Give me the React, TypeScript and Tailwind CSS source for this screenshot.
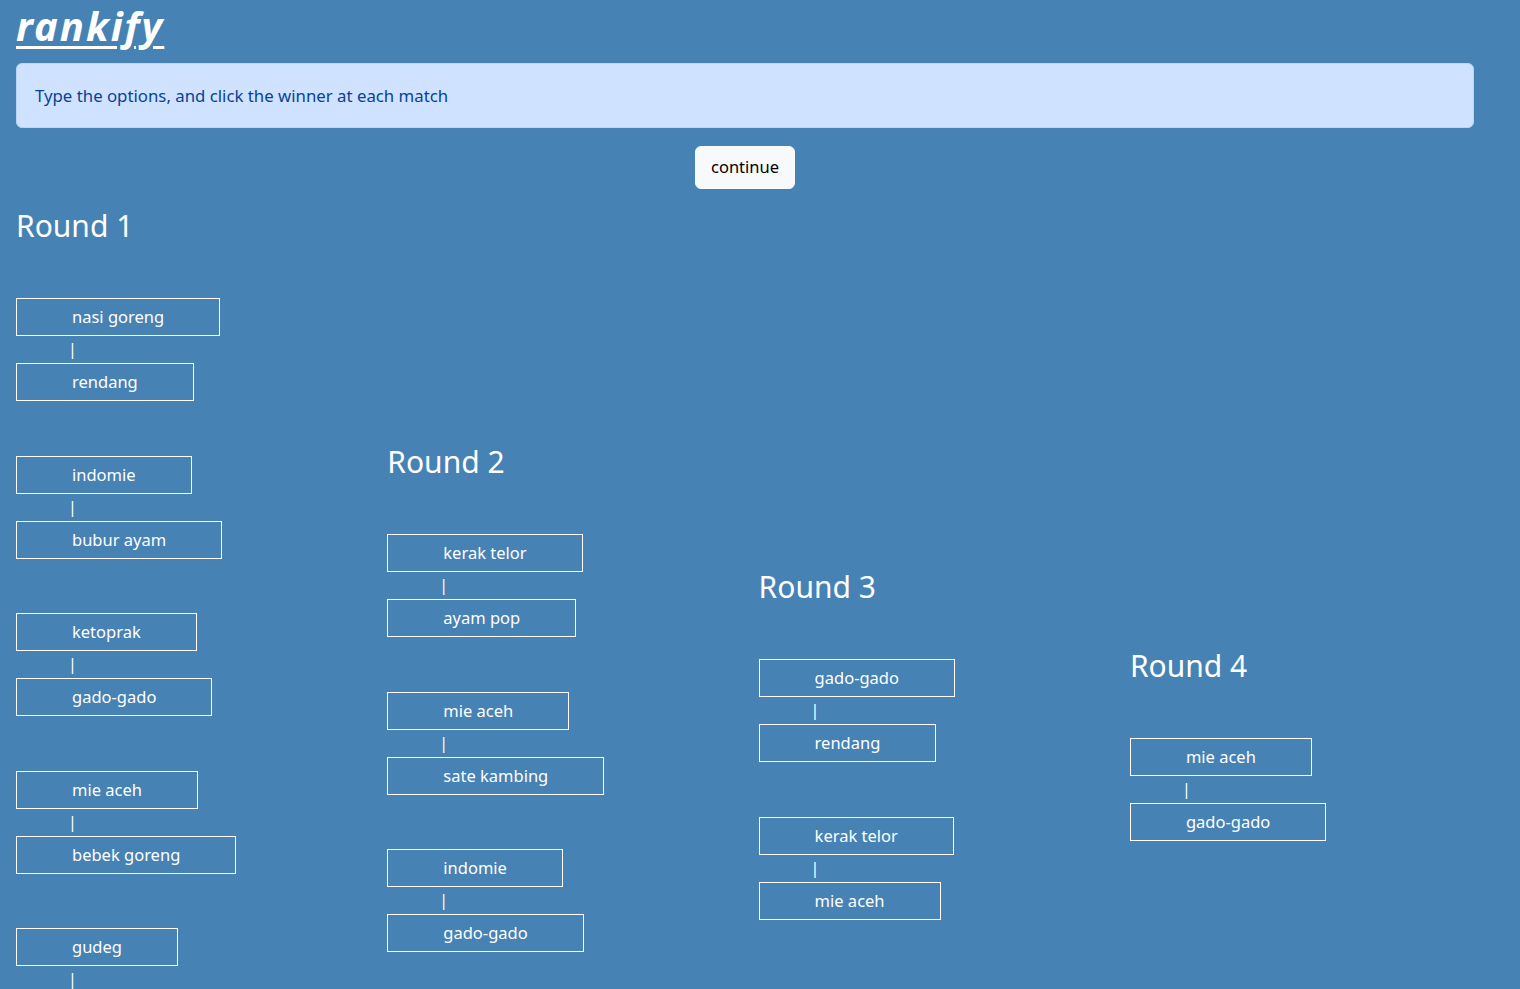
import React from "react";

const rounds: { title: string; top: string; matches: string[][] }[] = [
  {
    title: "Round 1",
    top: "mt-0",
    matches: [
      ["nasi goreng", "rendang"],
      ["indomie", "bubur ayam"],
      ["ketoprak", "gado-gado"],
      ["mie aceh", "bebek goreng"],
      ["gudeg", "soto betawi"],
      ["kerak telor", "pempek"],
    ],
  },
  {
    title: "Round 2",
    top: "mt-[236px]",
    matches: [
      ["kerak telor", "ayam pop"],
      ["mie aceh", "sate kambing"],
      ["indomie", "gado-gado"],
    ],
  },
  {
    title: "Round 3",
    top: "mt-[361px]",
    matches: [
      ["gado-gado", "rendang"],
      ["kerak telor", "mie aceh"],
    ],
  },
  {
    title: "Round 4",
    top: "mt-[440px]",
    matches: [["mie aceh", "gado-gado"]],
  },
];

function Box({ label }: { label: string }) {
  return (
    <div className="self-start border border-white px-[55px] py-[6px] text-[16.5px] leading-[24px] text-white cursor-pointer">
      {label}
    </div>
  );
}

export default function App() {
  return (
    <div
      className="h-[989px] overflow-hidden bg-[#4682b4] px-[16px]"
      style={{ fontFamily: '"Noto Sans", "Open Sans", sans-serif' }}
    >
      <h1 className="h-[56px] pt-[2px] text-[40px] font-bold italic leading-[48px] text-white">
        <a
          className="pr-[4px] tracking-[2px] underline decoration-[3px] underline-offset-[5px]"
          href="#"
        >
          rankify
        </a>
      </h1>
      <div className="mt-[7px] mr-[30px] flex h-[65px] items-center rounded-[6px] border border-[#b6d4fe] bg-[#cfe2ff] pl-[18px] text-[16.8px] text-[#084298]">
        Type the options, and click the winner at each match
      </div>
      <div className="mr-[30px] mt-[18px] flex justify-center">
        <button className="h-[43px] rounded-[6px] border border-[#f8f9fa] bg-[#f8f9fa] px-[15px] text-[16.5px] text-black">
          continue
        </button>
      </div>
      <div className="mt-[18px] flex items-start">
        {rounds.map((r) => (
          <div key={r.title} className={`flex w-[371.3px] shrink-0 flex-col ${r.top}`}>
            <h2 className="h-[38px] text-[30px] leading-[38px] text-white">{r.title}</h2>
            <div className="mt-[53px] flex flex-col gap-[54.5px]">
              {r.matches.map((m, i) => (
                <div key={i} className="flex flex-col">
                  <Box label={m[0]} />
                  <div className="h-[27px] pl-[52px] text-[16px] leading-[27px] text-white">|</div>
                  <Box label={m[1]} />
                </div>
              ))}
            </div>
          </div>
        ))}
      </div>
    </div>
  );
}
